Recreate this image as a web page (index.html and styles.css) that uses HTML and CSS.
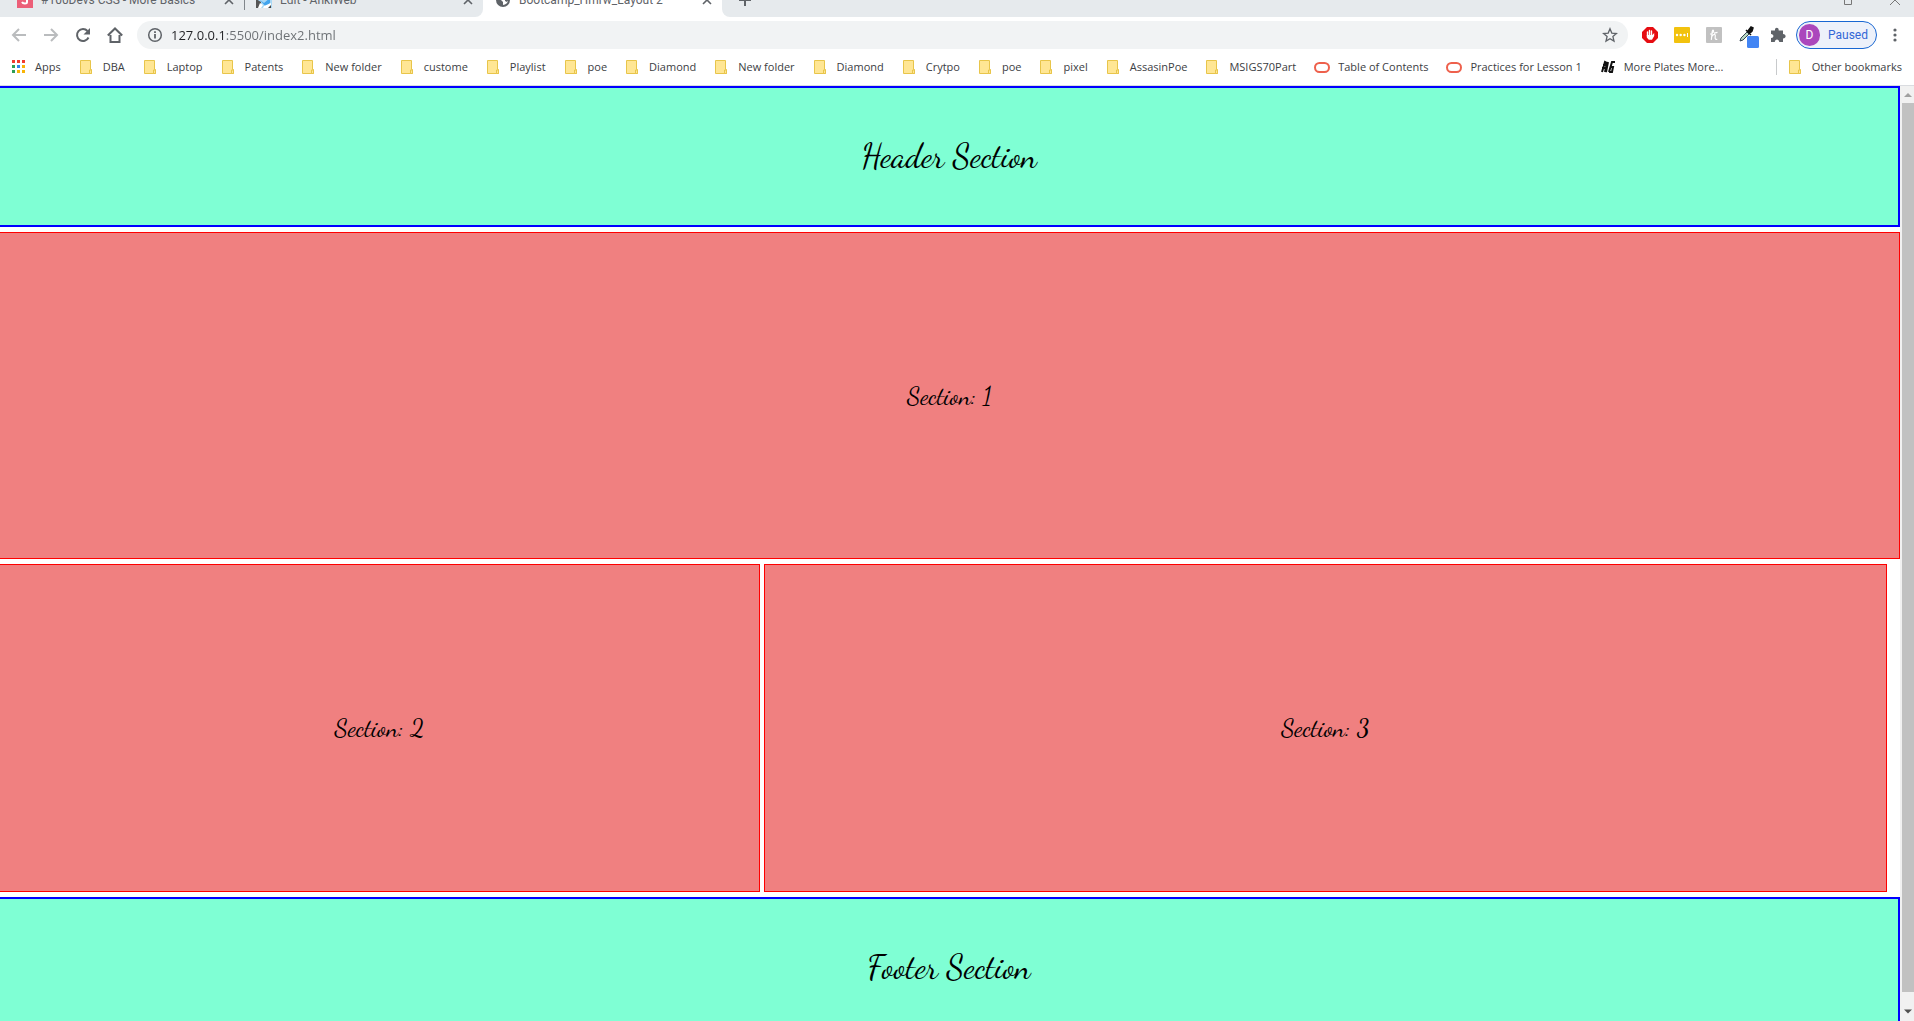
FILE: index.html
```html
<!DOCTYPE html>
<html lang="en">
<head>
<meta charset="utf-8">
<title>Bootcamp_Hmrw_Layout 2</title>
<link rel="stylesheet" href="styles.css">
</head>
<body>
<svg class="sprite" aria-hidden="true">
  <symbol id="folder" viewBox="0 0 16 16"><path d="M1.5 1.5h10v9h1v4h-11z" fill="#ffe694" stroke="#e8c54a"/><path d="M10.5 14.500v-3.500h2v3.500z" fill="#ffe694" stroke="#e8c54a"/></symbol>
  <symbol id="ring" viewBox="0 0 16 16"><rect x="1" y="4" width="14" height="9" rx="4.500" fill="none" stroke="#ee604c" stroke-width="2"/></symbol>
  <symbol id="close" viewBox="0 0 10 10"><path d="M1 1l8 8M9 1l-8 8" stroke="#5f6368" stroke-width="1.600"/></symbol>
</svg>
<div class="browser">
  <div class="tabs">
    <div class="tab">
      <svg class="icon" viewBox="0 0 16 16"><rect width="16" height="16" fill="#ec5f78"/><path d="M6 3h4v7c0 2-4 2-5 0" fill="none" stroke="#fff" stroke-width="2"/></svg>
      <span class="title">#100Devs CSS - More Basics</span>
      <button class="close" aria-label="Close tab"><svg viewBox="0 0 10 10"><use href="#close"/></svg></button>
    </div>
    <div class="tab divided">
      <svg class="icon" viewBox="0 0 16 16"><rect width="16" height="16" fill="#a9d8f5"/><path d="M0 7l5 3v6H0z" fill="#555"/><path d="M4 8l4 3 6-5v5l-4 4z" fill="#42a5ee"/><path d="M4 11l3 2-2 3H2zM8 14l7-3v5H7z" fill="#fff"/><path d="M12 16l3-3v3z" fill="#444"/></svg>
      <span class="title">Edit - AnkiWeb</span>
      <button class="close" aria-label="Close tab"><svg viewBox="0 0 10 10"><use href="#close"/></svg></button>
    </div>
    <div class="tab active">
      <svg class="icon" viewBox="0 0 16 16"><circle cx="8" cy="8" r="6" fill="#fff" stroke="#5f6368" stroke-width="2"/><path d="M2 7l4 1 2 2v4l-3-1-3-3zM8 2h4l2 5-2 3-2-1V7H7V4z" fill="#5f6368"/></svg>
      <span class="title">Bootcamp_Hmrw_Layout 2</span>
      <button class="close" aria-label="Close tab"><svg viewBox="0 0 10 10"><use href="#close"/></svg></button>
    </div>
    <div class="strip">
      <button class="new" aria-label="New tab"><svg viewBox="0 0 14 14"><path d="M7 1v12M1 7h12" stroke="#5f6368" stroke-width="2"/></svg></button>
      <span class="window">
        <button aria-label="Maximize"><svg viewBox="0 0 10 10"><path d="M1.500 1.500h7v8h-7z" fill="none" stroke="#777"/></svg></button>
        <button aria-label="Close window"><svg viewBox="0 0 10 10"><path d="M0 0l10 10M10 0L0 10" stroke="#777"/></svg></button>
      </span>
    </div>
  </div>

  <div class="toolbar">
    <button class="tool" aria-label="Back"><svg viewBox="0 0 16 16"><path d="M15 8H2M8 2L2 8l6 6" fill="none" stroke="#babcbe" stroke-width="2"/></svg></button>
    <button class="tool" aria-label="Forward"><svg viewBox="0 0 16 16"><path d="M1 8h13M8 2l6 6-6 6" fill="none" stroke="#babcbe" stroke-width="2"/></svg></button>
    <button class="tool" aria-label="Reload"><svg viewBox="0 0 16 16"><path d="M13.500 10.500A6 6 0 1 1 12.500 4" fill="none" stroke="#5f6368" stroke-width="2"/><path d="M15 1v6.500H8.500z" fill="#5f6368"/></svg></button>
    <button class="tool" aria-label="Home"><svg viewBox="0 0 16 16"><path d="M3.500 8v7h9V8M.8 8.500L8 1.500l7.200 7" fill="none" stroke="#5f6368" stroke-width="2"/></svg></button>
    <div class="address">
      <svg class="icon" viewBox="0 0 16 16"><circle cx="8" cy="8" r="6.300" fill="none" stroke="#5f6368" stroke-width="1.500"/><path d="M7.100 7h1.800v4.500H7.100zM7.100 4.300h1.800V6H7.100z" fill="#5f6368"/></svg>
      <input type="text" aria-label="Address" value="127.0.0.1:5500/index2.html">
      <button class="star" aria-label="Bookmark this page"><svg viewBox="0 0 16 16"><path d="M8 1.800l1.800 4.300 4.600.4-3.500 3 1.100 4.600L8 11.700l-4 2.400 1.100-4.600-3.500-3 4.600-.4z" fill="none" stroke="#5f6368" stroke-width="1.300"/></svg></button>
    </div>
    <div class="extensions">
      <button class="tool" aria-label="Ad blocker"><svg viewBox="0 0 16 16"><path d="M5 0h6l5 5v6l-5 5H5l-5-5V5z" fill="#e60d12"/><path d="M5.500 9V5M7.500 8V3.500M9.500 8V4" stroke="#fff" stroke-width="1.400" stroke-linecap="round"/><path d="M4.800 8h5.500l1.900-2v3L10 12.800H6.800L4.800 10.500z" fill="#fff"/></svg></button>
      <button class="tool" aria-label="Password manager"><svg viewBox="0 0 16 16"><rect width="16" height="16" rx="1" fill="#f2c20e"/><circle cx="3" cy="8" r="1.200" fill="#fff"/><circle cx="6.700" cy="8" r="1.200" fill="#fff"/><circle cx="10.400" cy="8" r="1.200" fill="#fff"/><path d="M13.500 6v4" stroke="#fff"/></svg></button>
      <button class="tool" aria-label="Coupons"><svg viewBox="0 0 16 16"><rect width="16" height="16" rx="1" fill="#c1c1c1"/><path d="M4 7c3 0 4.500-3.500 3-3.800C5.800 3 6 9 5.300 12.800M5.800 9.500c1.700-2.700 3.700-2.700 3.500-.5-.2 2-.6 4 2 3.200M8 6.200l3.500-.8" fill="none" stroke="#fff" stroke-width="1.200"/></svg></button>
      <button class="tool" aria-label="Colour picker"><svg class="picker" viewBox="0 0 20 22"><path d="M1 15l1-3 6-6 2 2-6 6z" fill="#b8d8c0" stroke="#345" /><path d="M7 4l5 5M9 5l3-4 2 1-1 3-2 2z" fill="#111" stroke="#111" stroke-width="1.500"/><rect x="8" y="10" width="12" height="12" rx="1.500" fill="#4285f4"/></svg></button>
      <button class="tool" aria-label="Extensions"><svg viewBox="0 0 16 16"><path d="M1 3.500h4C4.500-.2 9 .0 8.700 3.500H13V7c3.500 0 3.500 4.500 0 4.500V15H9.200c0-3.500-4.400-3.500-4.400 0H1v-4c3.200 0 3.200-4 0-4z" fill="#5f6368"/></svg></button>
    </div>
    <button class="profile"><span class="avatar">D</span>Paused</button>
    <button class="menu" aria-label="Menu"><svg viewBox="0 0 4 14"><circle cx="2" cy="2" r="1.600" fill="#5f6368"/><circle cx="2" cy="7" r="1.600" fill="#5f6368"/><circle cx="2" cy="12" r="1.600" fill="#5f6368"/></svg></button>
  </div>

  <nav class="bookmarks" aria-label="Bookmarks">
    <a href="#"><svg viewBox="0 0 16 16"><path d="M1 1h3v3H1zM6 1h3v3H6zM11 1h3v3h-3z" fill="#f23b2f"/><path d="M1 6h3v3H1zM1 11h3v3H1z" fill="#2e9e55"/><path d="M6 6h3v3H6z" fill="#2f85ee"/><path d="M11 6h3v3h-3zM6 11h3v3H6zM11 11h3v3h-3z" fill="#f8b406"/></svg>Apps</a>
    <a href="#"><svg><use href="#folder"/></svg>DBA</a>
    <a href="#"><svg><use href="#folder"/></svg>Laptop</a>
    <a href="#"><svg><use href="#folder"/></svg>Patents</a>
    <a href="#"><svg><use href="#folder"/></svg>New folder</a>
    <a href="#"><svg><use href="#folder"/></svg>custome</a>
    <a href="#"><svg><use href="#folder"/></svg>Playlist</a>
    <a href="#"><svg><use href="#folder"/></svg>poe</a>
    <a href="#"><svg><use href="#folder"/></svg>Diamond</a>
    <a href="#"><svg><use href="#folder"/></svg>New folder</a>
    <a href="#"><svg><use href="#folder"/></svg>Diamond</a>
    <a href="#"><svg><use href="#folder"/></svg>Crytpo</a>
    <a href="#"><svg><use href="#folder"/></svg>poe</a>
    <a href="#"><svg><use href="#folder"/></svg>pixel</a>
    <a href="#"><svg><use href="#folder"/></svg>AssasinPoe</a>
    <a href="#"><svg><use href="#folder"/></svg>MSIGS70Part</a>
    <a href="#"><svg><use href="#ring"/></svg>Table of Contents</a>
    <a href="#"><svg><use href="#ring"/></svg>Practices for Lesson 1</a>
    <a href="#"><svg viewBox="0 0 16 16"><path d="M2 13L5 3l2 1-2 9M6 13L8 3M2 9h5M3 6h4M9 13l3-10h3M9 13h3l1-5h-3" fill="none" stroke="#111" stroke-width="2"/></svg>More Plates More...</a>
    <a class="other" href="#"><svg><use href="#folder"/></svg>Other bookmarks</a>
  </nav>

  <div class="viewport">
    <div class="page">
      <header class="band"><h1>Header Section</h1></header>
      <section class="box"><h2>Section: 1</h2></section>
      <div class="row">
        <section class="box narrow"><h2>Section: 2</h2></section>
        <section class="box wide"><h2>Section: 3</h2></section>
      </div>
      <footer class="band"><h1>Footer Section</h1></footer>
    </div>
    <div class="scrollbar" aria-hidden="true">
      <svg viewBox="0 0 12 17"><path d="M2 11l4-4 4 4z" fill="#a0a0a0"/></svg>
      <div class="thumb"></div>
      <svg class="down" viewBox="0 0 12 17"><path d="M2 7h8l-4 4z" fill="#505050"/></svg>
    </div>
  </div>
</div>
</body>
</html>
```
FILE: styles.css
```css
* {
  box-sizing: border-box;
}

body {
  margin: 0;
  background: #fff;
  color: #3c4043;
  font: 12px/16px "Segoe UI", Roboto, sans-serif;
}

button {
  display: flex;
  align-items: center;
  justify-content: center;
  padding: 0;
  border: 0;
  background: none;
  font: inherit;
}

svg {
  display: block;
  flex: none;
}

.sprite {
  display: none;
}

.icon {
  width: 16px;
  height: 16px;
}

.browser {
  display: flex;
  flex-direction: column;
  height: 100vh;
  overflow: hidden;
}

/* Tab strip */
.tabs {
  display: flex;
  align-items: flex-end;
  height: 17px;
  flex: none;
  padding-left: 5px;
  overflow: hidden;
  background: linear-gradient(90deg, #e6eaed 470px, #fff 470px, #fff 740px, #e6eaed 740px);
}

.tab {
  display: flex;
  align-items: center;
  width: 239px;
  height: 34px;
  padding: 0 10px 0 12px;
  gap: 8px;
  background: #e6eaed;
  color: #5f6368;
}

.tab.divided {
  border-radius: 0 0 8px 0;
  background: linear-gradient(#80868b, #80868b) 0 7px / 1px 20px no-repeat #e6eaed;
}

.tab.active {
  background: #fff;
}

.title {
  flex: 1;
  white-space: nowrap;
}

.close svg {
  width: 10px;
  height: 10px;
}

.strip {
  display: flex;
  align-items: center;
  flex: 1;
  height: 34px;
  padding: 0 14px 0 16px;
  justify-content: space-between;
  border-radius: 0 0 0 8px;
  background: #e6eaed;
}

.new svg {
  width: 14px;
  height: 14px;
}

.window {
  display: flex;
  gap: 37px;
  align-items: center;
  height: 24px;
}

.window svg {
  width: 10px;
  height: 10px;
}

/* Toolbar */
.toolbar {
  display: flex;
  align-items: center;
  flex: none;
  height: 36px;
  padding: 0 17px 0 11px;
}

.tool svg {
  width: 16px;
  height: 16px;
}

.tool {
  width: 16px;
  height: 16px;
  margin-right: 16px;
}

.address {
  display: flex;
  align-items: center;
  flex: 1;
  height: 28px;
  margin-left: -2px;
  padding: 0 10px;
  gap: 8px;
  border-radius: 14px;
  background: #f1f3f4;
}

.address input {
  flex: 1;
  min-width: 0;
  padding: 0;
  border: 0;
  outline: 0;
  background: linear-gradient(90deg, #202124 54px, #6b6f73 54px);
  -webkit-background-clip: text;
  background-clip: text;
  color: transparent;
  font: 13px/20px "Segoe UI", "Open Sans", sans-serif;
}

.star svg {
  width: 16px;
  height: 16px;
}

.extensions {
  display: flex;
  padding-left: 14px;
}

.extensions .tool:last-child {
  margin-right: 10px;
}

.picker.picker {
  width: 20px;
  height: 22px;
  margin: 4px 0 0 6px;
}

.profile {
  width: 81px;
  height: 28px;
  padding: 0 8px 0 2px;
  gap: 8px;
  border: 1px solid #1967d2;
  border-radius: 14px;
  background: #edf1fa;
  color: #3367d6;
}

.avatar {
  width: 22px;
  border-radius: 11px;
  background: #ab47bc;
  color: #fff;
  line-height: 22px;
}

.menu {
  margin-left: 16px;
}

.menu svg {
  width: 4px;
  height: 14px;
}

/* Bookmarks */
.bookmarks {
  display: flex;
  align-items: center;
  flex: none;
  height: 33px;
  padding: 0 12px 4px 11px;
  gap: 18px;
  border-bottom: 1px solid #dadce0;
  white-space: nowrap;
  font: 11px/16px "Segoe UI", "Open Sans", sans-serif;
}

.bookmarks a {
  display: flex;
  align-items: center;
  gap: 8px;
  color: inherit;
  text-decoration: none;
}

.bookmarks svg {
  width: 16px;
  height: 16px;
}

.bookmarks .other {
  margin-left: auto;
  padding-left: 11px;
  border-left: 1px solid #c8cacc;
}

/* Page */
.viewport {
  display: flex;
  flex: 1;
  min-height: 0;
}

.page {
  display: flex;
  flex-direction: column;
  flex: 1;
  gap: 5px;
  color: #000;
  font-family: "Dancing Script", "Liberation Serif", cursive;
}

.band,
.box {
  display: flex;
  align-items: center;
  justify-content: center;
  flex: none;
  border-left: 0;
}

.band {
  height: 141px;
  border: solid #00f;
  border-width: 2px 2px 2px 0;
  background: #7fffd4;
}

.box {
  height: 327px;
  border: solid #f00;
  border-width: 1px 1px 1px 0;
  background: #f08080;
}

.row {
  display: flex;
  flex: none;
  gap: 4px;
  padding-right: 13px;
}

.row .box {
  height: 328px;
}

.narrow {
  flex: 760;
}

.wide {
  flex: 1123;
  border-left-width: 1px;
}

h1,
h2 {
  margin: 0;
  font-weight: 400;
}

h1 {
  font-size: 33px;
  line-height: 40px;
}

h2 {
  font-size: 25px;
  line-height: 30px;
}

.scrollbar {
  display: flex;
  flex-direction: column;
  width: 14px;
  padding-left: 2px;
  background: #f1f1f1;
}

.scrollbar svg {
  width: 12px;
  height: 17px;
}

.thumb {
  flex: 1;
  background: #c1c1c1;
}

.scrollbar .down {
  margin: 8px 0 -1px;
  height: 22px;
}
```
